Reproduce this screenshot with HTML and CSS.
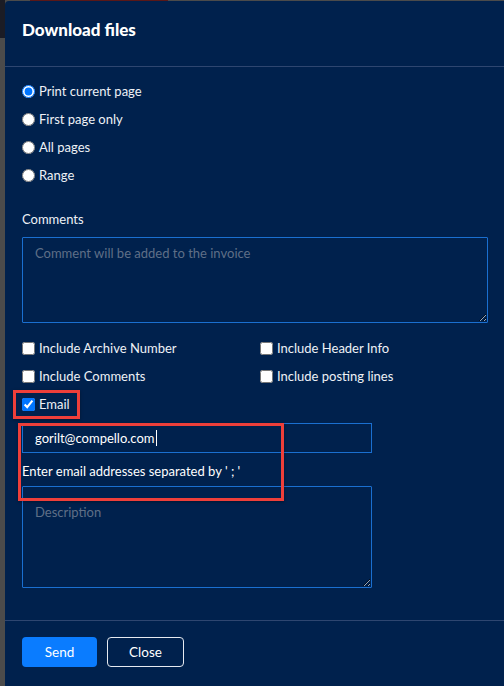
FILE: index.html
```html
<!DOCTYPE html>
<html lang="en">
<head>
<meta charset="utf-8">
<title>Download files</title>
<link rel="stylesheet" href="styles.css">
</head>
<body>
<div class="backdrop">
  <div class="bg-strip"><span class="bg-red"></span></div>
  <div class="modal">
    <div class="modal-header">
      <h1 class="modal-title">Download files</h1>
    </div>
    <div class="modal-body">
      <label class="row"><input type="radio" name="pages" checked><span>Print current page</span></label>
      <label class="row"><input type="radio" name="pages"><span>First page only</span></label>
      <label class="row"><input type="radio" name="pages"><span>All pages</span></label>
      <label class="row"><input type="radio" name="pages"><span>Range</span></label>

      <div class="field-label">Comments</div>
      <textarea class="textarea comments" placeholder="Comment will be added to the invoice"></textarea>

      <div class="check-grid">
        <label class="row"><input type="checkbox"><span>Include Archive Number</span></label>
        <label class="row"><input type="checkbox"><span>Include Header Info</span></label>
        <label class="row"><input type="checkbox"><span>Include Comments</span></label>
        <label class="row"><input type="checkbox"><span>Include posting lines</span></label>
      </div>

      <label class="row"><input type="checkbox" checked><span>Email</span></label>
      <div class="email-input"><span class="email-text">gorilt@compello.com</span><span class="caret"></span></div>
      <div class="help">Enter email addresses separated by ' ; '</div>
      <textarea class="textarea description" placeholder="Description"></textarea>

      <div class="mark mark-email"></div>
      <div class="mark mark-address"></div>
    </div>
    <div class="modal-footer">
      <button class="btn btn-primary">Send</button>
      <button class="btn btn-outline">Close</button>
    </div>
  </div>
</div>
</body>
</html>
```
FILE: styles.css
```css
* { box-sizing: border-box; }
html, body { margin: 0; padding: 0; }
body {
  width: 504px;
  height: 686px;
  overflow: hidden;
  background: #4b4b4b;
  font-family: "Lato", "Noto Sans", sans-serif;
}
.backdrop {
  display: flex;
  height: 686px;
  position: relative;
}
.bg-strip {
  width: 5px;
  flex: none;
  background: linear-gradient(#1b1c25 0, #1b1c25 38px, #4b4b4b 38px);
}
.bg-red {
  position: absolute;
  left: 30px;
  top: 0;
  width: 138px;
  height: 1px;
  background: #5a1818;
}
.modal {
  flex: 1;
  margin-top: 1px;
  background: #00214d;
  border-top-left-radius: 4px;
  display: flex;
  flex-direction: column;
  color: #eef1f6;
}
.modal-header {
  padding: 19px 17px 26px;
  border-bottom: 1px solid #2e4670;
}
.modal-title {
  margin: 0;
  font-size: 17px;
  line-height: 20px;
  font-weight: 900;
  color: #fff;
}
.modal-body {
  position: relative;
  padding: 10px 16px 32px 17px;
  display: flex;
  flex-direction: column;
  border-bottom: 1px solid #2e4670;
}
.row {
  display: flex;
  align-items: center;
  height: 28px;
  font-size: 13px;
  color: #eef1f6;
}
.row input {
  margin: 0 4px 0 0;
  width: 13px;
  height: 13px;
}
.field-label {
  margin-top: 21px;
  font-size: 13px;
  line-height: 18px;
}
.textarea {
  display: block;
  background: transparent;
  border: 1px solid #1a6fd0;
  border-radius: 1px;
  color: #fff;
  font-family: inherit;
  font-size: 13px;
  padding: 7px 12px;
  resize: vertical;
}
.textarea::placeholder { color: #5f6f87; }
.comments {
  margin-top: 9px;
  width: 466px;
  height: 86px;
}
.check-grid {
  margin-top: 11px;
  display: grid;
  grid-template-columns: 238px 1fr;
}
.email-input {
  margin-top: 5px;
  width: 350px;
  height: 30px;
  border: 1px solid #1a6fd0;
  display: flex;
  align-items: center;
  padding-left: 12px;
  font-size: 13px;
  color: #fff;
}
.caret {
  width: 1px;
  height: 16px;
  background: #fff;
  margin-left: 1px;
}
.help {
  margin-top: 9px;
  font-size: 13px;
  line-height: 18px;
  color: #fff;
}
.description {
  margin-top: 6px;
  width: 350px;
  height: 102px;
  padding-top: 17px;
}
.mark {
  position: absolute;
  border: 3px solid #ee3f3a;
  box-shadow: 0 1px 3px rgba(0,0,0,0.35);
  pointer-events: none;
}
.mark-email {
  left: 8px;
  top: 323px;
  width: 67px;
  height: 29px;
}
.mark-address {
  left: 13px;
  top: 356px;
  width: 266px;
  height: 78px;
}
.modal-footer {
  padding: 16px 17px;
  display: flex;
  gap: 10px;
}
.btn {
  height: 30px;
  border-radius: 4px;
  font-family: inherit;
  font-size: 13.5px;
  color: #fff;
  cursor: pointer;
}
.btn-primary {
  width: 75px;
  background: #0a7cff;
  border: none;
}
.btn-outline {
  width: 77px;
  background: transparent;
  border: 1px solid #e6eaf0;
}
```
